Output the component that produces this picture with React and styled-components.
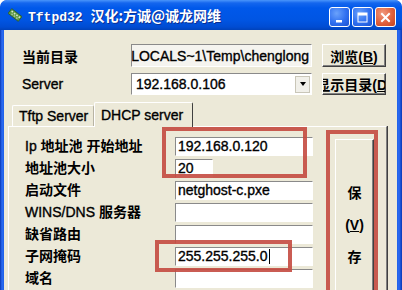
import React from "react";
import styled, { createGlobalStyle } from "styled-components";

const GlobalStyle = createGlobalStyle`
  html, body {
    margin: 0;
    padding: 0;
    background: #ffffff;
  }
  body {
    font-family: "Liberation Sans", "Noto Sans CJK SC", sans-serif;
    font-size: 14px;
    color: #000;
  }
`;

const Window = styled.div`
  position: relative;
  width: 402px;
  height: 290px;
  overflow: hidden;
  display: flex;
  flex-direction: column;
  border-radius: 7px 7px 0 0;
  background: #1d5fe8;
`;

const TitleBar = styled.div`
  height: 30px;
  flex: none;
  display: flex;
  align-items: center;
  padding: 0 6px 0 8px;
  border-radius: 7px 7px 0 0;
  background: linear-gradient(
    #4a95fb 0,
    #1466ee 3px,
    #0058ea 8px,
    #0055e3 20px,
    #004cd2 27px,
    #0042ba 30px
  );
`;

const TitleText = styled.div`
  margin-left: 6px;
  color: #fff;
  font-weight: 700;
  text-shadow: 1px 1px 0 #0b2f92;
  white-space: nowrap;
  .mono {
    font-family: "Liberation Mono", monospace;
    font-size: 13px;
  }
  .cjk {
    font-family: "Noto Sans CJK SC", sans-serif;
    font-size: 14px;
  }
`;

const CapGroup = styled.div`
  margin-left: auto;
  margin-top: 4px;
  display: flex;
  gap: 2px;
`;

const CapButton = styled.div`
  width: 21px;
  height: 20px;
  box-sizing: border-box;
  border: 1px solid #fff;
  border-radius: 3px;
  display: flex;
  align-items: center;
  justify-content: center;
  background: ${(p) =>
    p.$close
      ? "radial-gradient(circle at 35% 30%, #f19a7e 0, #e0603c 55%, #c3431f 100%)"
      : "radial-gradient(circle at 35% 30%, #6aa2fb 0, #2f6ff0 55%, #1c52d0 100%)"};
`;

const Frame = styled.div`
  flex: 1;
  display: flex;
  padding: 0 5px 0 4px;
  min-height: 0;
  background: linear-gradient(
    to right,
    #0936b4 0,
    #2c6cf2 2px,
    #1d5fe8 4px,
    #1d5fe8 calc(100% - 5px),
    #2c6cf2 calc(100% - 3px),
    #0936b4 100%
  );
`;

const Client = styled.div`
  flex: 1;
  background: #ece9d8;
  padding-top: 14px;
  display: flex;
  flex-direction: column;
`;

const Row = styled.div`
  display: flex;
  align-items: center;
  margin-left: 18px;
  height: ${(p) => p.$h}px;
  margin-bottom: ${(p) => p.$mb || 0}px;
`;

const Label = styled.div`
  width: ${(p) => p.$w}px;
  flex: none;
  font-weight: 700;
  white-space: nowrap;
`;

const Latin = styled.span`
  font-weight: 400;
  -webkit-text-stroke: 0.35px #000;
`;

const Sunken = styled.div`
  box-sizing: border-box;
  border-top: 1px solid #8a8a8a;
  border-left: 1px solid #8a8a8a;
  border-right: 1px solid #fff;
  border-bottom: 1px solid #fff;
  overflow: hidden;
  white-space: nowrap;
  -webkit-text-stroke: 0.35px #000;
`;

const PathBox = styled(Sunken)`
  width: 181px;
  height: 23px;
  background: #f5f4ef;
  display: flex;
  align-items: center;
  justify-content: flex-end;
  padding-right: 2px;
  span {
    flex-shrink: 0;
  }
`;

const Combo = styled(Sunken)`
  width: 181px;
  height: 22px;
  background: #fff;
  display: flex;
  align-items: center;
  padding-left: 4px;
`;

const DropButton = styled.div`
  margin-left: auto;
  margin-right: 1px;
  width: 15px;
  height: 17px;
  box-sizing: border-box;
  background: #f1f0ea;
  border: 1px solid #c9c6b8;
  display: flex;
  align-items: center;
  justify-content: center;
  &::after {
    content: "";
    border-left: 3.5px solid transparent;
    border-right: 3.5px solid transparent;
    border-top: 4px solid #000;
  }
`;

const Button = styled.div`
  width: 64px;
  height: ${(p) => p.$h}px;
  margin-left: 10px;
  box-sizing: border-box;
  border-top: 1px solid #fff;
  border-left: 1px solid #fff;
  border-right: 1px solid #404040;
  border-bottom: 1px solid #404040;
  box-shadow: inset -1px -1px 0 #808080;
  display: flex;
  align-items: center;
  justify-content: center;
  overflow: hidden;
  white-space: nowrap;
  font-weight: 700;
  span {
    flex-shrink: 0;
  }
`;

const TabControl = styled.div`
  flex: 1;
  display: flex;
  flex-direction: column;
  margin: 6px 10px 0 4px;
`;

const TabStrip = styled.div`
  height: 25px;
  display: flex;
  align-items: flex-end;
  padding-left: 4px;
`;

const Tab = styled.div`
  position: relative;
  z-index: 1;
  box-sizing: border-box;
  width: ${(p) => (p.$active ? 99 : 82)}px;
  height: ${(p) => (p.$active ? 25 : 21)}px;
  margin-bottom: ${(p) => (p.$active ? -1 : 0)}px;
  padding-left: 6px;
  display: flex;
  align-items: center;
  background: #ece9d8;
  border-top: 1px solid #fff;
  border-left: 1px solid #fff;
  border-right: 1px solid ${(p) => (p.$active ? "#404040" : "#b8b4a4")};
  border-radius: 2px 2px 0 0;
  -webkit-text-stroke: 0.35px #000;
  white-space: nowrap;
`;

const Panel = styled.div`
  flex: 1;
  display: flex;
  padding: 10px 11px 0 16px;
  border-top: 1px solid #fff;
  border-left: 1px solid #fff;
  border-right: 1px solid #808080;
  box-shadow: 1px 0 0 #404040;
`;

const Form = styled.div`
  display: grid;
  grid-template-columns: 150px 138px;
  grid-auto-rows: 19px;
  row-gap: 3px;
  align-content: start;
`;

const FormLabel = styled(Label)`
  line-height: 19px;
`;

const Field = styled(Sunken)`
  width: ${(p) => p.$w || 138}px;
  height: 19px;
  background: #fff;
  padding-left: 2px;
  line-height: 17px;
`;

const Caret = styled.span`
  display: inline-block;
  width: 1px;
  height: 15px;
  margin-left: 1px;
  background: #000;
  vertical-align: -3px;
`;

const SaveButton = styled.div`
  flex: none;
  width: 39px;
  height: 174px;
  margin: 2px 0 0 22px;
  box-sizing: border-box;
  border-top: 1px solid #fff;
  border-left: 1px solid #fff;
  border-right: 1px solid #404040;
  border-bottom: 1px solid #404040;
  box-shadow: inset -1px -1px 0 #808080;
  display: flex;
  flex-direction: column;
  align-items: center;
  padding-top: 43px;
  gap: 12px;
  font-weight: 700;
  line-height: 20px;
`;

// red annotation boxes drawn over the dialog
const Mark = styled.div`
  position: absolute;
  left: ${(p) => p.$x}px;
  top: ${(p) => p.$y}px;
  width: ${(p) => p.$w}px;
  height: ${(p) => p.$h}px;
  box-sizing: border-box;
  border: 4px solid rgba(196, 74, 64, 0.9);
  pointer-events: none;
`;

function AppIcon() {
  return (
    <svg width="14" height="14" viewBox="0 0 14 14">
      <g transform="rotate(38 7 7)">
        <rect x="0.5" y="4" width="13" height="6" fill="#5c9a45" stroke="#2f5a28" strokeWidth="0.8" />
        <rect x="2" y="5.3" width="1.6" height="1.6" fill="#d8e4cf" />
        <rect x="5" y="5.3" width="1.6" height="1.6" fill="#d8e4cf" />
        <rect x="8" y="5.3" width="1.6" height="1.6" fill="#d8e4cf" />
        <rect x="11" y="5.3" width="1.6" height="1.6" fill="#d8e4cf" />
        <rect x="3.5" y="7.5" width="1.6" height="1.6" fill="#a8c49a" />
        <rect x="6.5" y="7.5" width="1.6" height="1.6" fill="#a8c49a" />
        <rect x="9.5" y="7.5" width="1.6" height="1.6" fill="#a8c49a" />
      </g>
    </svg>
  );
}

function CaptionIcon({ kind }) {
  if (kind === "min") {
    return (
      <svg width="13" height="13" viewBox="0 0 13 13">
        <rect x="3" y="9" width="6" height="2.5" fill="#fff" />
      </svg>
    );
  }
  if (kind === "max") {
    return (
      <svg width="13" height="13" viewBox="0 0 13 13">
        <rect x="2" y="2" width="9" height="9" fill="none" stroke="#fff" strokeWidth="1" />
        <rect x="2" y="2" width="9" height="2.5" fill="#fff" />
      </svg>
    );
  }
  return (
    <svg width="13" height="13" viewBox="0 0 13 13">
      <path d="M3 3 L10 10 M10 3 L3 10" stroke="#fff" strokeWidth="2" strokeLinecap="square" />
    </svg>
  );
}

const fields = [
  { label: <><Latin>Ip</Latin> 地址池 开始地址</>, value: "192.168.0.120" },
  { label: "地址池大小", value: "20", width: 38 },
  { label: "启动文件", value: "netghost-c.pxe" },
  { label: <><Latin>WINS/DNS</Latin> 服务器</>, value: "" },
  { label: "缺省路由", value: "" },
  { label: "子网掩码", value: "255.255.255.0", caret: true },
  { label: "域名", value: "" },
];

export default function App() {
  return (
    <>
      <GlobalStyle />
      <Window>
        <TitleBar>
          <AppIcon />
          <TitleText>
            <span className="mono">Tftpd32 </span>
            <span className="cjk">汉化:方诚@诚龙网维</span>
          </TitleText>
          <CapGroup>
            <CapButton>
              <CaptionIcon kind="min" />
            </CapButton>
            <CapButton>
              <CaptionIcon kind="max" />
            </CapButton>
            <CapButton $close>
              <CaptionIcon kind="close" />
            </CapButton>
          </CapGroup>
        </TitleBar>
        <Frame>
          <Client>
            <Row $h={23} $mb={6}>
              <Label $w={109}>当前目录</Label>
              <PathBox>
                <span>{"C:\\DOCUME~1\\ADMINI~1\\LOCALS~1\\Temp\\chenglong"}</span>
              </PathBox>
              <Button $h={23}>
                <span>
                  浏览(<u>B</u>)
                </span>
              </Button>
            </Row>
            <Row $h={22}>
              <Label $w={109}>
                <Latin>Server</Latin>
              </Label>
              <Combo>
                192.168.0.106
                <DropButton />
              </Combo>
              <Button $h={22}>
                <span>
                  显示目录(<u>D</u>)
                </span>
              </Button>
            </Row>
            <TabControl>
              <TabStrip>
                <Tab>Tftp Server</Tab>
                <Tab $active>DHCP server</Tab>
              </TabStrip>
              <Panel>
                <Form>
                  {fields.map((f, i) => (
                    <React.Fragment key={i}>
                      <FormLabel>{f.label}</FormLabel>
                      <Field $w={f.width}>
                        {f.value}
                        {f.caret && <Caret />}
                      </Field>
                    </React.Fragment>
                  ))}
                </Form>
                <SaveButton>
                  <span>保</span>
                  <span>
                    (<u>V</u>)
                  </span>
                  <span>存</span>
                </SaveButton>
              </Panel>
            </TabControl>
          </Client>
        </Frame>
        <Mark $x={162} $y={127} $w={145} $h={51} />
        <Mark $x={155} $y={240} $w={137} $h={32} />
        <Mark $x={326} $y={130} $w={52} $h={200} />
      </Window>
    </>
  );
}
